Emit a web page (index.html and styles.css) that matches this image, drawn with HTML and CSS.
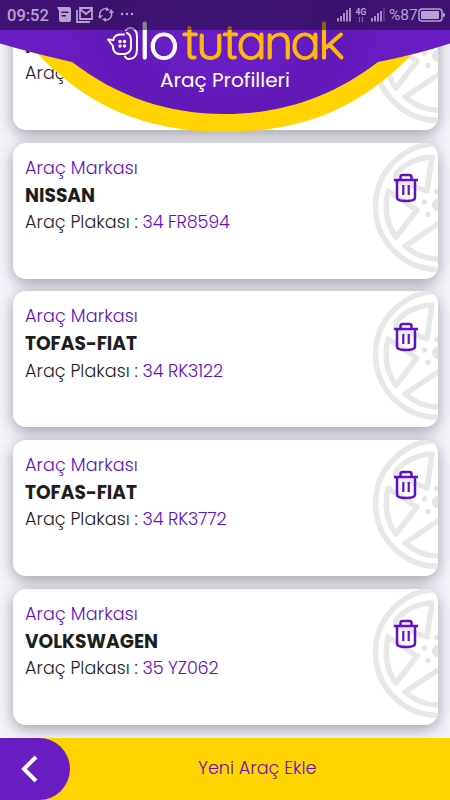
FILE: index.html
```html
<!DOCTYPE html>
<html lang="tr">
<head>
<meta charset="utf-8">
<title>Araç Profilleri</title>
<link rel="stylesheet" href="styles.css">
</head>
<body>
<svg width="0" height="0" class="defs">
  <symbol id="wheel" viewBox="0 0 66 136">
    <g fill="none" stroke="#e8e8e8" stroke-width="5.500" stroke-linejoin="round">
      <circle cx="66.500" cy="63.500" r="63"/>
      <path d="M24 31Q38 15 60 14L55 48L24 37Z"/>
      <path d="M16 48L45 67L24 94Q10 75 16 48Z"/>
      <path d="M69 79L33 103Q49 117 69 116"/>
    </g>
    <g fill="#e4e4e4"><circle cx="52.500" cy="59" r="2.700"/><circle cx="56" cy="71.500" r="2.700"/><circle cx="65" cy="48.500" r="2.700"/><circle cx="66.500" cy="62" r="6.500"/></g>
  </symbol>
  <symbol id="trash" viewBox="0 0 26 30">
    <g fill="none" stroke="#6210c4" stroke-width="2.500">
      <path d="M1 7H25M7.500 6V4Q7.500 2 9.500 2H16.500Q18.500 2 18.500 4V6M4 7V24.500Q4 28 13 28T22 24.500V7"/>
      <path d="M10.300 12V22M15.700 12V22" stroke-width="2.200"/>
    </g>
  </symbol>
</svg>
<main class="list">
  <section class="card">
    <div class="info scrolled"><p class="brand">NISSAN</p><p class="row"><span class="plate-label">Araç Plakası :</span></p></div>
    <svg class="wheel"><use href="#wheel"/></svg>
  </section>
  <section class="card">
    <div class="info"><p class="label">Araç Markası</p><p class="brand">NISSAN</p><p class="row"><span class="plate-label">Araç Plakası :</span><span class="plate">34 FR8594</span></p></div>
    <svg class="wheel"><use href="#wheel"/></svg><svg class="trash"><use href="#trash"/></svg>
  </section>
  <section class="card">
    <div class="info"><p class="label">Araç Markası</p><p class="brand">TOFAS-FIAT</p><p class="row"><span class="plate-label">Araç Plakası :</span><span class="plate">34 RK3122</span></p></div>
    <svg class="wheel"><use href="#wheel"/></svg><svg class="trash"><use href="#trash"/></svg>
  </section>
  <section class="card">
    <div class="info"><p class="label">Araç Markası</p><p class="brand">TOFAS-FIAT</p><p class="row"><span class="plate-label">Araç Plakası :</span><span class="plate">34 RK3772</span></p></div>
    <svg class="wheel"><use href="#wheel"/></svg><svg class="trash"><use href="#trash"/></svg>
  </section>
  <section class="card">
    <div class="info"><p class="label">Araç Markası</p><p class="brand">VOLKSWAGEN</p><p class="row"><span class="plate-label">Araç Plakası :</span><span class="plate">35 YZ062</span></p></div>
    <svg class="wheel"><use href="#wheel"/></svg><svg class="trash"><use href="#trash"/></svg>
  </section>
</main>
<footer class="footer">
  <div class="back"><svg width="20" height="30" viewBox="0 0 20 30"><path d="M17 3L5 15L17 27" fill="none" stroke="#fff" stroke-width="4"/></svg></div>
  <div class="add"><span>Yeni Araç Ekle</span></div>
</footer>
<header class="header">
  <svg width="450" height="140" viewBox="0 0 450 140">
    <defs>
      <radialGradient id="glow" gradientUnits="userSpaceOnUse" cx="225" cy="0" r="225">
        <stop offset="0" stop-color="#651cc1"/><stop offset=".32" stop-color="#691dc5"/><stop offset=".5" stop-color="#6019b6"/><stop offset=".7" stop-color="#681bc0"/><stop offset="1" stop-color="#6a1dc4"/>
      </radialGradient>
    </defs>
    <path d="M34 50C84 104 142 132 225 132S366 104 416 50Z" fill="#ffd400"/>
    <path d="M0 0H450V43.500Q418 54 378 62C332 97 282 114 225 114S118 97 72 62Q32 53 0 43.500Z" fill="url(#glow)"/>
    <g fill="none" stroke="#fff" stroke-width="2" stroke-linecap="round" stroke-linejoin="round">
      <path d="M124 34.500H120Q114 35 113.500 40L108 39.500L113 46V48Q114 54 120 54H125Q131 53 131 47V40Q131 35 127 33"/>
      <path d="M126 30Q128 27.500 131 28Q137 29 137 37V49Q137 59 129 59Q126 59 125 56.500"/>
    </g>
    <g fill="#fff"><circle cx="120" cy="41.500" r="1.700"/><circle cx="124.500" cy="41.500" r="1.700"/><circle cx="120" cy="46" r="1.700"/><circle cx="124.500" cy="46" r="1.700"/></g>
    <text class="logo" x="139" y="59" textLength="40" fill="#fff" stroke="#fff">lo</text>
    <text class="logo" x="182" y="59" textLength="163" fill="#ffb90a" stroke="#ffb90a">tutanak</text>
  </svg>
  <h1 class="title">Araç Profilleri</h1>
  <div class="status">
    <span class="clock">09:52</span>
    <svg class="left-icons" width="80" height="18" viewBox="0 0 80 18">
      <path fill="#b7a3d0" fill-rule="evenodd" d="M0 1H12Q14 1 14 3V14Q14 16 12 16H4Q2 16 2 14V5ZM4.500 5.500V7H11.500V5.500ZM4.500 9V10.500H9V9Z"/>
      <path fill="none" stroke="#b7a3d0" stroke-width="1.800" d="M20 4V16H33M23 2H35V13H23ZM23 3L29 8L35 3"/>
      <path fill="none" stroke="#b7a3d0" stroke-width="1.400" d="M43.500 11A5.500 5.500 0 0 1 51 3.500M54 6A5.500 5.500 0 0 1 47 13.500"/>
      <path fill="#b7a3d0" d="M41 10L46 9L43 13ZM52 7L57 7L54 3ZM49 1L53 4L49 5ZM49 12V16L45 13Z"/>
      <circle cx="65" cy="8" r="1.200" fill="#b7a3d0"/><circle cx="70" cy="8" r="1.200" fill="#b7a3d0"/><circle cx="75" cy="8" r="1.200" fill="#b7a3d0"/>
    </svg>
    <svg class="right-icons" width="50" height="18" viewBox="0 0 50 18">
      <path stroke="#b7a3d0" stroke-width="1.700" d="M1 12V15.500M4 10V15.500M7 7V15.500M10 4V15.500M13 2V15.500M35 12V15.500M38 10V15.500M41 7V15.500M44 5V15.500"/>
      <path stroke="#67478f" stroke-width="1.500" d="M47 2V15.500"/>
      <text x="18.500" y="9" class="network">4G</text>
      <path fill="none" stroke="#80639f" stroke-width="1.200" d="M22.500 11V16M25.500 11V16"/>
    </svg>
    <span class="percent">%87</span>
    <svg width="28" height="16" viewBox="0 0 28 16"><rect x="1" y="2" width="23" height="12" rx="3" fill="none" stroke="#b7a3d0" stroke-width="1.500"/><rect x="3" y="4" width="18" height="8" rx="1" fill="#b7a3d0"/><path d="M25 5.500L27 7V9L25 10.500Z" fill="#b7a3d0"/></svg>
  </div>
</header>
</body>
</html>
```

FILE: styles.css
```css
* { box-sizing: border-box; }
body {
  margin: 0;
  width: 450px;
  height: 800px;
  overflow: hidden;
  position: relative;
  display: flex;
  flex-direction: column;
  background: #f6f4fb;
  font-family: Poppins, Inter, "Open Sans", sans-serif;
  color: #1e1e1e;
}
.defs { position: absolute; }
.list {
  height: 738px;
  flex: none;
  overflow: hidden;
  padding: 0 12.5px;
  display: flex;
  flex-direction: column;
  gap: 12.7px;
}
.card {
  position: relative;
  flex: none;
  height: 136px;
  border-radius: 13px;
  background: #fff;
  box-shadow: 0 4px 16px rgba(40, 35, 55, .42);
  padding: 12px 12.5px;
}
.card:first-child { margin-top: -6.2px; }
.info { line-height: 27.2px; font-size: 17.600px; font-weight: 300; white-space: nowrap; }
.scrolled { padding-top: 27.2px; }
.info p { margin: 0; }
.label { color: #6210c4; letter-spacing: .1px; }
.info .brand { font-weight: 700; font-size: 18.600px; }
.row { display: flex; gap: 4px; }
.plate-label { width: 113.500px; letter-spacing: .02px; }
.plate { color: #6210c4; letter-spacing: -.15px; }
.wheel {
  position: absolute;
  right: 0;
  top: 0;
  width: 66px;
  height: 136px;
  border-radius: 0 13px 13px 0;
}
.trash { position: absolute; right: 18.500px; top: 30.500px; width: 26px; height: 30px; }
.footer {
  height: 62px;
  flex: none;
  display: flex;
  background: #ffd400;
  position: relative;
}
.back {
  width: 70px;
  border-radius: 0 31px 31px 0;
  background: #6a1dc2;
  display: flex;
  align-items: center;
  padding-left: 19px;
}
.add {
  flex: 1;
  display: flex;
  align-items: center;
  padding-left: 128px;
  padding-bottom: 2px;
  font-size: 17.600px;
  font-weight: 300;
  color: #6210c4;
}
.header { position: absolute; left: 0; top: 0; width: 450px; height: 140px; }
.header > svg { display: block; }
.logo { font-family: Quicksand, Poppins, Inter, sans-serif; font-size: 50px; font-weight: 400; stroke-width: 1.1px; stroke-linejoin: round; }
.title {
  position: absolute;
  left: 0;
  top: 67px;
  width: 450px;
  margin: 0;
  text-align: center;
  font-size: 20px;
  line-height: 26px;
  font-weight: 400;
  color: #fff;
}
.status {
  position: absolute;
  left: 0;
  top: 0;
  width: 450px;
  height: 30px;
  background: rgba(20, 10, 35, .5);
  display: flex;
  align-items: center;
  padding: 0 4px 0 7px;
  color: #b7a3d0;
  font-family: Roboto, sans-serif;
  font-size: 16.500px;
}
.clock { width: 50px; font-weight: 500; }
.right-icons { margin-left: auto; margin-right: 2px; }
.percent { width: 29px; font-size: 15.500px; }
.network { font: 700 8.500px Roboto, sans-serif; fill: #b7a3d0; }
```
